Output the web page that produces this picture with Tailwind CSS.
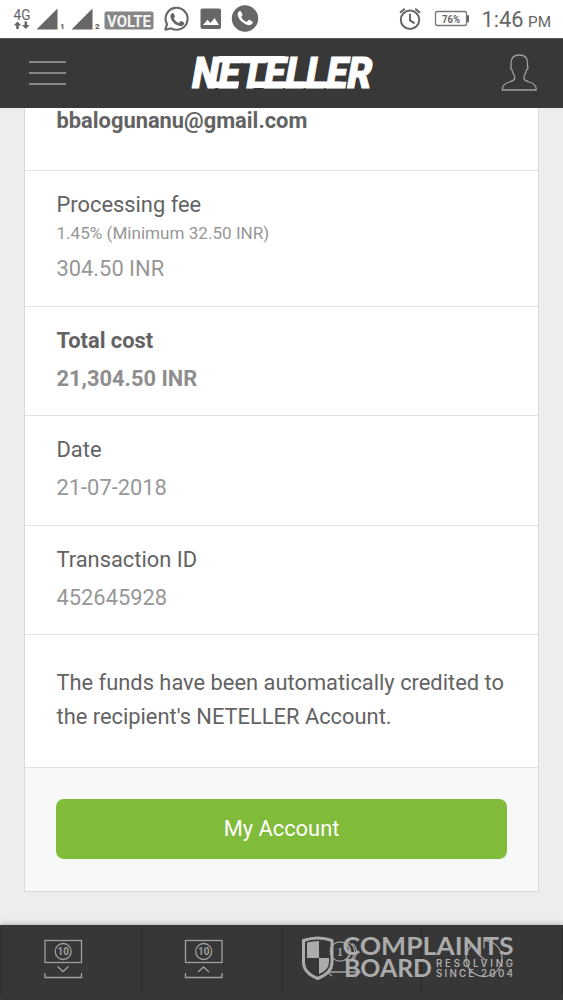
<!DOCTYPE html>
<html lang="en">
<head>
<meta charset="utf-8">
<title>NETELLER</title>
<script src="https://cdn.jsdelivr.net/npm/@tailwindcss/browser@4"></script>
</head>
<body class="w-[563px] h-[1000px] overflow-hidden flex flex-col bg-[#ebeeed] font-['Roboto',sans-serif] text-[#636363]">
<!-- status bar -->
<header class="h-[38px] shrink-0 bg-white">
<svg class="block" width="563" height="38" viewBox="0 0 563 38" fill="#666" font-family="Roboto, sans-serif">
<text x="13.500" y="19.500" font-size="14" textLength="17" lengthAdjust="spacingAndGlyphs">4G</text>
<path d="M17.500 21.500l3.800 4h-2.500V29h-2.600v-3.500h-2.500zM25.800 29l-3.800-4h2.500v-3.500h2.600V25h2.500z"/>
<path d="M57.500 8.500V29.500H36.500zM92.500 8.500V29.500H71.500z"/>
<text x="60" y="29" font-size="8" font-weight="900">1</text>
<text x="95" y="29" font-size="8" font-weight="900">2</text>
<rect x="104.500" y="11.500" width="49" height="18" rx="2" fill="#868686"/>
<text x="107" y="26.500" font-size="17" font-weight="700" fill="#f4f4f4" textLength="44" lengthAdjust="spacingAndGlyphs">VOLTE</text>
<path d="M165.300 29.800l1.700-5.700a11 11 0 1 1 4.200 4.200z" fill="none" stroke="#666" stroke-width="2.100" stroke-linejoin="round"/>
<path d="M171.800 13.500c.8-.8 1.700-.6 2.100.2l1 2.400c.2.600-.1 1.100-1.200 2.100 1.200 2.300 2.900 3.800 5.200 4.700l1.500-1.600c.3-.4.700-.3 1.100-.1l2.300 1.100c.6.400.5 1.400 0 2.200-1 1.600-3.500 2-5.700 1.100-4.100-1.600-6.700-4.500-7.600-8.100-.4-1.600.2-3.100 1.300-4z"/>
<rect x="200.500" y="8.500" width="20.500" height="20.500" rx="2"/>
<path d="M203 25l4.500-5.300 3 3.300 4-5 4.500 7z" fill="#fff"/>
<circle cx="245" cy="18.500" r="13.200"/>
<path d="M239 11.500c.9-.8 1.900-.5 2.300.4l1.100 2.700c.2.700-.1 1.200-1.200 2.200 1.200 2.500 2.800 4.100 5.400 5.300l1.800-1.900c.3-.4.800-.4 1.200-.2l2.700 1.400c.7.500.5 1.600-.1 2.400-1.100 1.600-3.600 1.700-6 .7-4.400-1.700-7.300-4.800-8.400-8.900-.4-1.600.1-3.200 1.200-4.100z" fill="#fff"/>
<g fill="none" stroke="#666" stroke-width="2"><circle cx="410" cy="19.800" r="9.200"/><path d="M410 13.800v6.600l4.600 2.900M400 12.800l4.800-4M420 12.800l-4.800-4"/></g>
<rect x="435.500" y="11.500" width="31" height="14" rx="2" fill="none" stroke="#777" stroke-width="1.300"/>
<rect x="467" y="15" width="2" height="7.500" rx="1"/>
<text x="442" y="22.800" font-size="11" font-weight="700" textLength="18" lengthAdjust="spacingAndGlyphs">76%</text>
<text x="481.500" y="27" font-size="22" textLength="42" lengthAdjust="spacingAndGlyphs">1:46</text>
<text x="528" y="27" font-size="15.500" textLength="23" lengthAdjust="spacingAndGlyphs">PM</text>
</svg>
</header>
<!-- navigation -->
<nav class="h-[70px] shrink-0 bg-[#383838] border-t border-[#555]">
<svg class="block" width="563" height="69" viewBox="0 39 563 69">
<path d="M29 62h37M29 73h37M29 84h37" stroke="#a0a0a0" stroke-width="1.600"/>
<text transform="translate(190 87.500) skewX(-10)" font-family="Roboto, sans-serif" font-weight="900" font-size="43.500" fill="#fff" stroke="#fff" stroke-width="1" textLength="180" lengthAdjust="spacingAndGlyphs">NETELLER</text>
<path d="M219 56h66l-1 6.500h-66zM209 81.500h30l-1 6.500h-30zM251 81.500h90l-1 6.500h-90z" fill="#fff"/>
<path d="M502.500 90v-1.600c0-4 3-5.200 7-6.400 3.300-1 5-1.800 5.200-3.600.2-1.600-.4-3-1.300-4.600-1-1.600-1.200-2.900-1.400-4-1.300-.9-1.500-2.700-.8-3.800-.7-5.500.6-11 8.100-11s8.800 5.500 8.100 11c.7 1.100.5 2.900-.8 3.800-.2 1.100-.4 2.400-1.400 4-.9 1.600-1.500 3-1.300 4.600.2 1.800 1.900 2.600 5.200 3.600 4 1.200 7 2.400 7 6.400V90z" fill="none" stroke="#a0a0a0" stroke-width="1.300"/>
</svg>
</nav>
<!-- transaction -->
<main class="h-[817px] shrink-0 px-6">
<div class="h-[784px] w-[515px] border border-t-0 border-[#d6dad8] bg-white flex flex-col text-[21.870px] leading-[30px] [&>section]:shrink-0 [&>section]:px-[31.500px] [&>section]:border-b [&>section]:border-[#dfe2e1]">
<section class="h-[63px]"><p class="-mt-[2px] font-bold whitespace-nowrap">bbalogunanu@gmail.com</p></section>
<section class="h-[136px] pt-[19px]"><p>Processing fee</p><p class="text-[17.100px] leading-[26px] text-[#979797]">1.45% (Minimum 32.50 INR)</p><p class="mt-2 text-[#979797]">304.50 INR</p></section>
<section class="h-[109px] pt-[19px] font-bold"><p>Total cost</p><p class="mt-[7.500px] text-[#8e8e8e]">21,304.50 INR</p></section>
<section class="h-[110px] pt-[19px]"><p>Date</p><p class="mt-2 text-[#979797]">21-07-2018</p></section>
<section class="h-[109px] pt-[19px]"><p>Transaction ID</p><p class="mt-[7.500px] text-[#979797]">452645928</p></section>
<section class="h-[133px] pt-[31px] leading-[34px] whitespace-nowrap"><p>The funds have been automatically credited to<br>the recipient's NETELLER Account.</p></section>
<div class="grow bg-[#f7f9f9] px-[31px] pt-[31px]"><button class="h-[60px] w-[451px] rounded-lg bg-[#80bb3a] text-white">My Account</button></div>
</div>
</main>
<!-- bottom tabs -->
<footer class="h-[75px] shrink-0 bg-[#373737] shadow-[0_-1px_5px_#aeb3b0]">
<svg class="block" width="563" height="75" viewBox="0 925 563 75" font-family="Roboto, sans-serif">
<path d="M1.500 928v65M142 928v65M282 928v65M421.500 928v65M562 928v65" stroke="#2e2e2e" stroke-width="1.500"/>
<g fill="none" stroke="#a0a0a0" stroke-width="1.300">
<rect x="45" y="940.500" width="36.500" height="22"/><circle cx="63.200" cy="951.500" r="8"/><path d="M57.500 966.500l5.500 5 5.500-5M45 973v4.500h36.500V973"/>
<rect x="185.500" y="940.500" width="36.500" height="22"/><circle cx="203.700" cy="951.500" r="8"/><path d="M198 972l5.500-5 5.500 5M185.500 973v4.500H222V973"/>
<circle cx="340" cy="951.500" r="9.700"/><path d="M344 942.500a9.700 9.700 0 0 1 1 18M348 942.500a9.700 9.700 0 0 1 1 18M352 943.500a9.700 9.700 0 0 1-1 17M332 968l-5 4 5 4M327 972h33M355 967l5 5-5 5"/>
<path d="M471 946a18 18 0 1 0 19-4.500q-3-1-6-1v8M478 954l7 6"/>
</g>
<g fill="#a0a0a0" font-weight="700" font-size="10" text-anchor="middle"><text x="63.300" y="955.300">10</text><text x="203.800" y="955.300">10</text><text x="340" y="956" font-family="Liberation Serif, serif" font-size="12">1</text></g>
<!-- shield and wordmark overlay -->
<g fill="#ababab">
<path d="M303.500 940.500q14-5 28.500 0v21.500q0 11-14.200 16.500Q303.500 973 303.500 962z" fill="none" stroke="#ababab" stroke-width="3"/>
<path d="M307 942.500q5-1.500 12-1.500V958h-12zM319 958h10v4q0 8-10 12z"/>
<g font-family="Lato, sans-serif" font-weight="700" font-size="24"><text x="342.500" y="954.500" textLength="171" lengthAdjust="spacingAndGlyphs">COMPLAINTS</text><text x="344" y="977" textLength="88" lengthAdjust="spacingAndGlyphs">BOARD</text></g>
<g font-family="Inter, sans-serif" font-weight="600" font-size="9.700"><text x="436" y="967" textLength="77" lengthAdjust="spacing">RESOLVING</text><text x="436" y="977.300" textLength="77" lengthAdjust="spacing">SINCE 2004</text></g>
</g>
</svg>
</footer>
</body>
</html>
